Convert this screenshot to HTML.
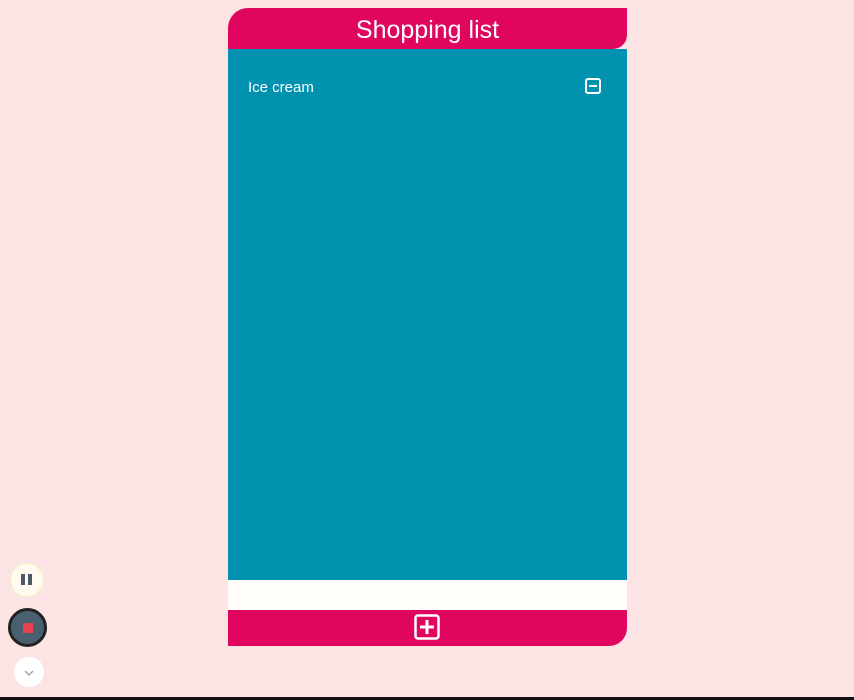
<!DOCTYPE html>
<html><head><style>
html,body{margin:0;padding:0;width:854px;height:700px;overflow:hidden;background:#fde4e4;font-family:"Liberation Sans",sans-serif;}
.app{position:absolute;left:228px;top:8px;width:399px;}
.hdr{height:41px;background:#e0065f;border-radius:20px 0 14px 0;color:#fff;font-size:25px;text-align:center;line-height:45px;}
.body{height:531px;background:#0092ae;position:relative;}
.item{position:absolute;left:20px;top:30px;color:#fff;font-size:15px;}
.ftr{height:36px;background:#e0065f;border-radius:0 0 18px 0;position:relative;}
.inp{height:30px;background:#fffdfa;}
.btn{position:absolute;border-radius:50%;}
.bar{position:absolute;left:0;top:697px;width:854px;height:3px;background:#111;}
</style></head><body>
<div class="app">
<div class="hdr">Shopping list</div>
<div class="body"><div class="item">Ice cream</div>
<svg style="position:absolute;left:357px;top:29px" width="16" height="16"><rect x="1" y="1" width="14" height="14" rx="2" fill="none" stroke="#fff" stroke-width="2"/><line x1="4" y1="8" x2="12" y2="8" stroke="#fff" stroke-width="2"/></svg>
</div>
<div class="inp"></div>
<div class="ftr"><svg style="position:absolute;left:186px;top:4px" width="26" height="26"><rect x="1.5" y="1.5" width="23" height="23" rx="2.5" fill="none" stroke="#fff" stroke-width="2.5"/><line x1="13" y1="6" x2="13" y2="20" stroke="#fff" stroke-width="3"/><line x1="6" y1="13" x2="20" y2="13" stroke="#fff" stroke-width="3"/></svg></div>
</div>
<div class="btn" style="left:10px;top:563px;width:32px;height:32px;background:#fffbee;border:1px solid #f4f0c0;"><div style="position:absolute;left:10px;top:10px;width:4px;height:11px;background:#4a5a6a"></div><div style="position:absolute;left:17px;top:10px;width:4px;height:11px;background:#4a5a6a"></div></div>
<div class="btn" style="left:8px;top:608px;width:33px;height:33px;background:#4a6070;border:3px solid #222;"><div style="position:absolute;left:12px;top:12px;width:10px;height:10px;background:#e84050"></div></div>
<div class="btn" style="left:14px;top:657px;width:30px;height:30px;background:#fff;"><svg width="30" height="30"><polyline points="11,14 15,18 19,14" fill="none" stroke="#9aa" stroke-width="1.5"/></svg></div>
<div class="bar"></div>
</body></html>
